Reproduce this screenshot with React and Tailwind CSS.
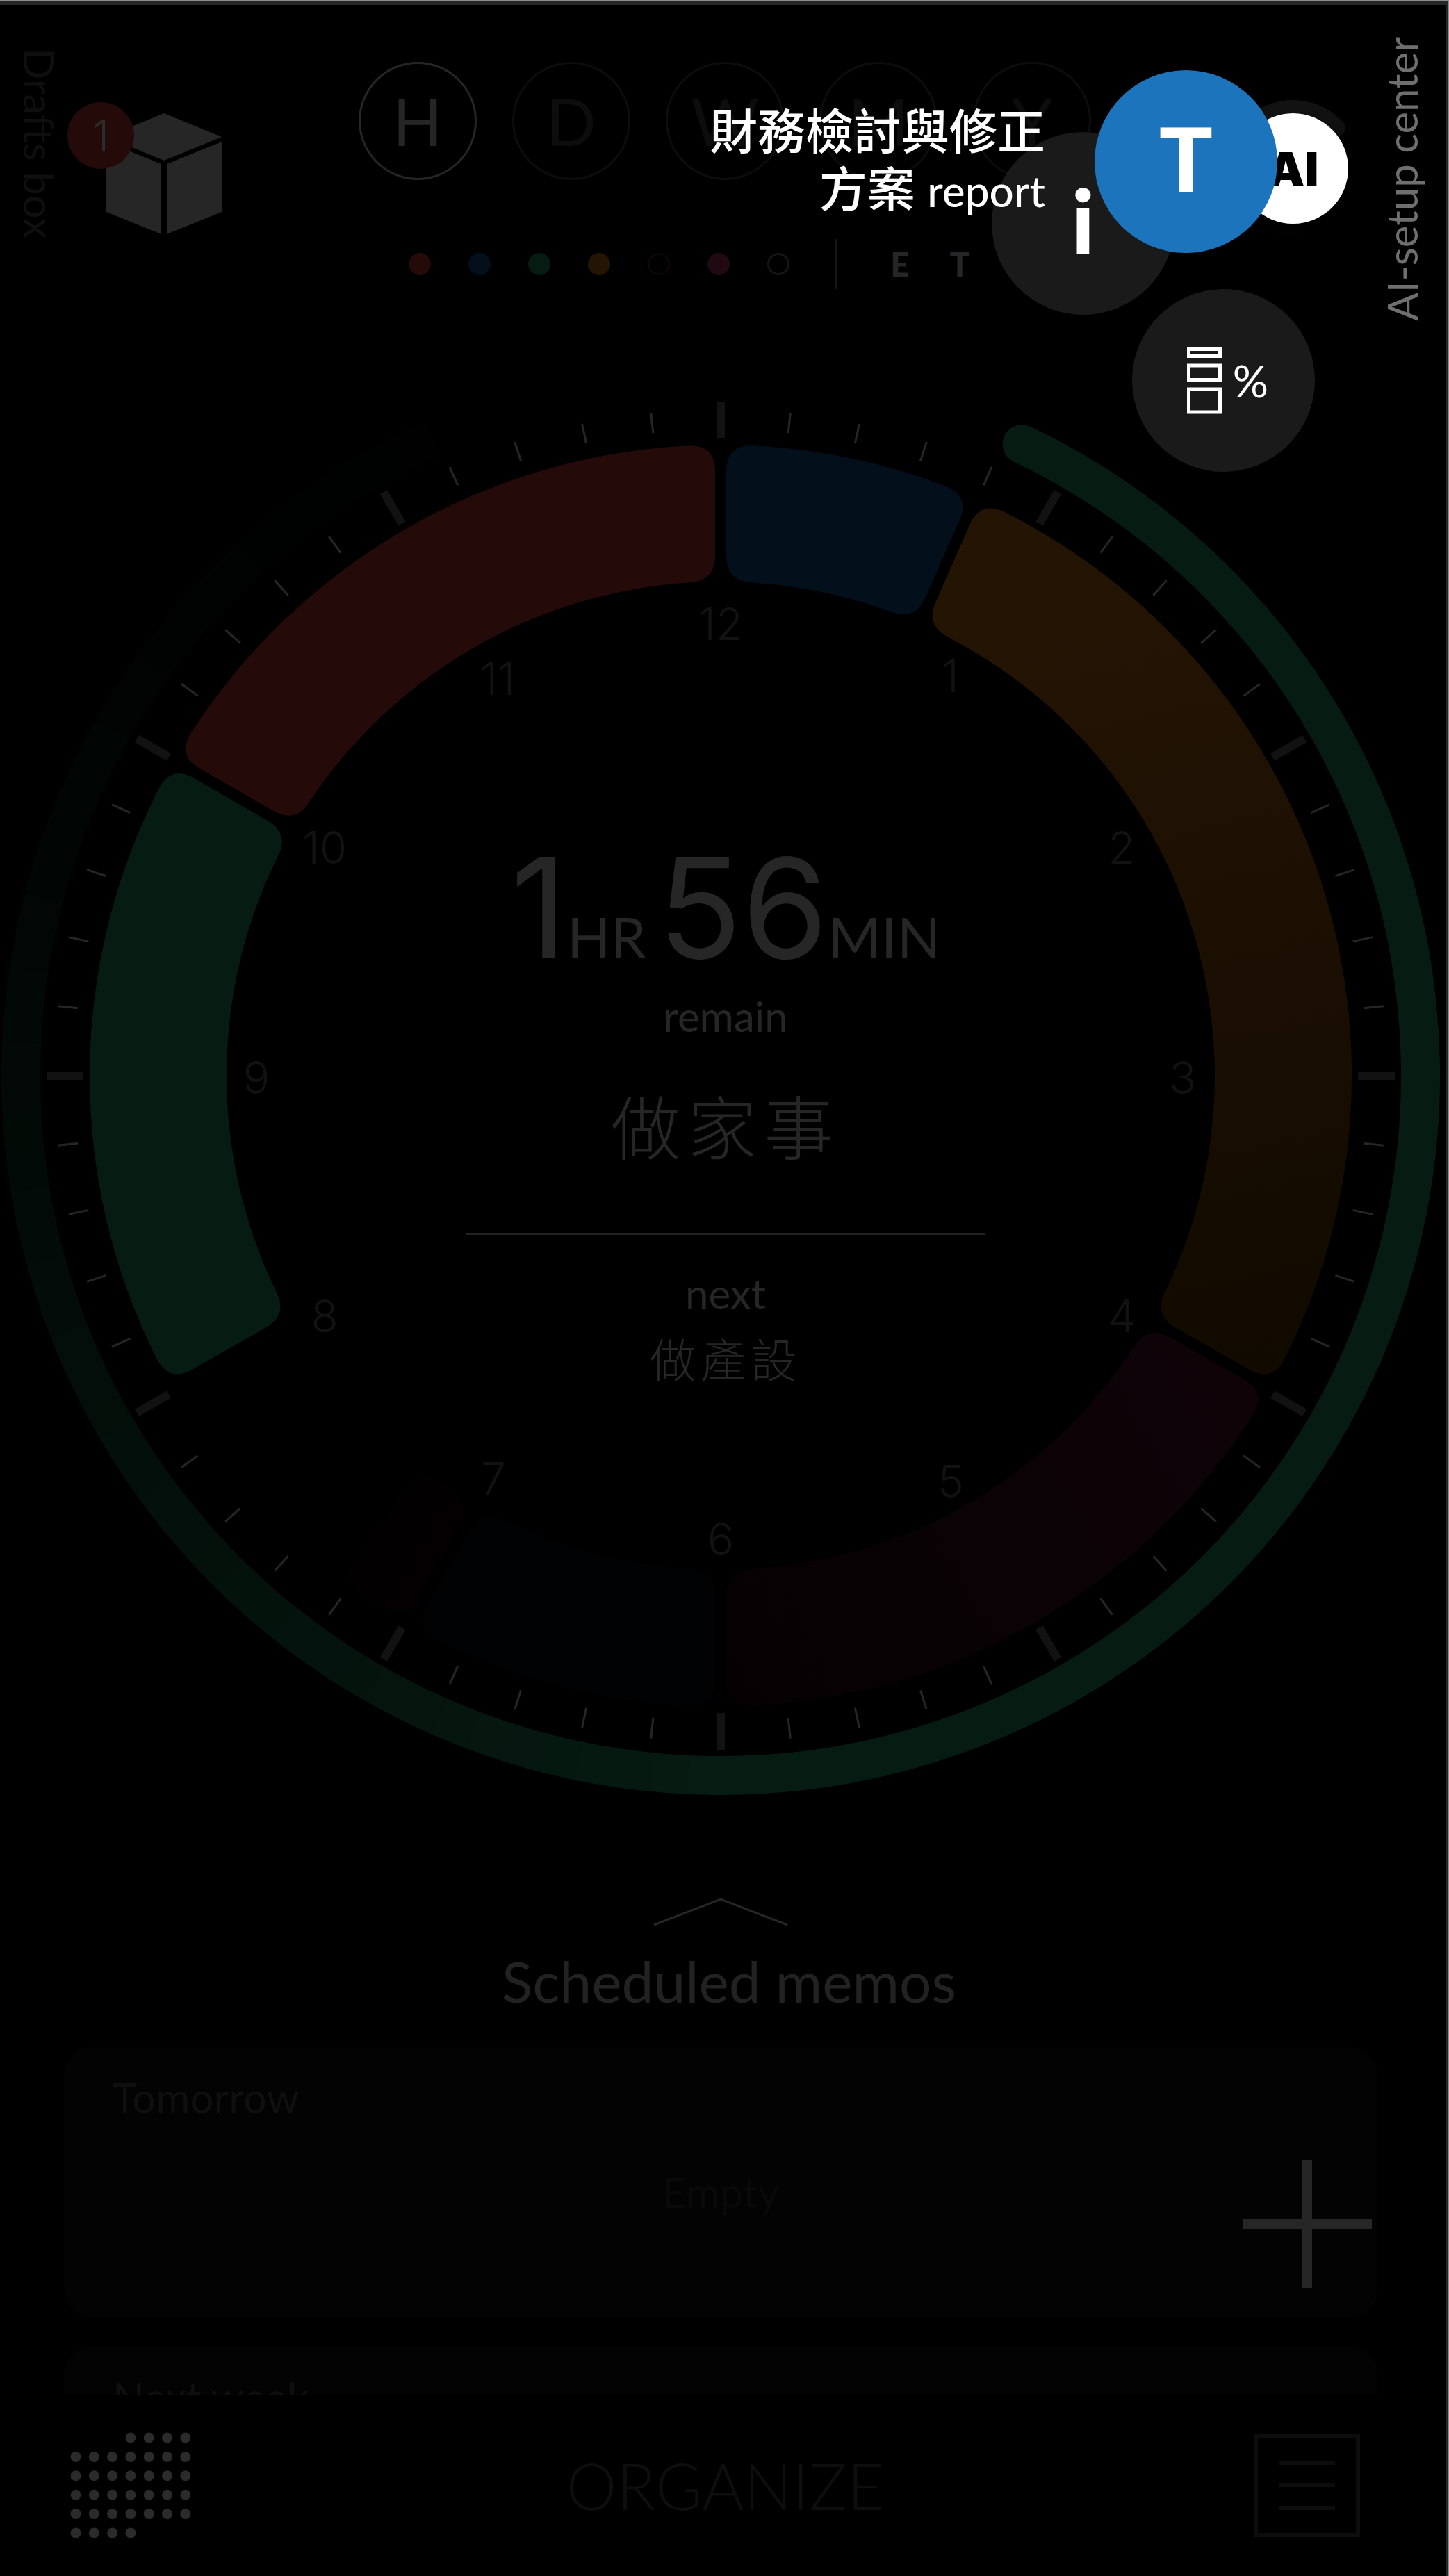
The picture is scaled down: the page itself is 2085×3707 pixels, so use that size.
const RED = '#250a0a';
const BLUE = '#030f1a';
const GREEN = '#061b12';

const CX = 1037;
const CY = 1548;

function polar(r, deg) {
  const a = (deg * Math.PI) / 180;
  return [CX + r * Math.sin(a), CY - r * Math.cos(a)];
}

// Annular sector with rounded corners; `gap` keeps the sides parallel to the hour line.
function sector(from, to, outer = 908, inner = 711, gap = 8, round = 38) {
  const shift = (r, extra) => (Math.asin((gap + extra) / r) * 180) / Math.PI;
  const p = (r, deg) => polar(r, deg).map((n) => n.toFixed(1)).join(' ');
  const o = outer;
  const i = inner;
  const large = to - from > 180 ? 1 : 0;
  return [
    `M ${p(o, from + shift(o, round))}`,
    `A ${o} ${o} 0 ${large} 1 ${p(o, to - shift(o, round))}`,
    `Q ${p(o, to - shift(o, 0))} ${p(o - round, to - shift(o - round, 0))}`,
    `L ${p(i + round, to - shift(i + round, 0))}`,
    `Q ${p(i, to - shift(i, 0))} ${p(i, to - shift(i, round))}`,
    `A ${i} ${i} 0 ${large} 0 ${p(i, from + shift(i, round))}`,
    `Q ${p(i, from + shift(i, 0))} ${p(i + round, from + shift(i + round, 0))}`,
    `L ${p(o - round, from + shift(o - round, 0))}`,
    `Q ${p(o, from + shift(o, 0))} ${p(o, from + shift(o, round))}`,
    'Z',
  ].join(' ');
}

function arc(r, from, to) {
  const [x1, y1] = polar(r, from);
  const [x2, y2] = polar(r, to);
  const large = to - from > 180 ? 1 : 0;
  return `M ${x1} ${y1} A ${r} ${r} 0 ${large} 1 ${x2} ${y2}`;
}

const hours = [
  ['12', 1037, 898], ['1', 1367, 973], ['2', 1614, 1220], ['3', 1702, 1551],
  ['4', 1614, 1894], ['5', 1368, 2132], ['6', 1037, 2215], ['7', 710, 2128],
  ['8', 467, 1894], ['9', 369, 1551], ['10', 467, 1220], ['11', 716, 977],
];

const fade = Array.from({ length: 55 }, (_, k) => {
  const from = 180 + k * 3;
  const t = Math.max(0, 1 - (k + 0.5) / 55);
  const f = Math.pow(t, 1.4);
  return { from, color: `rgb(${Math.round(6 * f)},${Math.round(27 * f)},${Math.round(18 * f)})` };
});

function Dial() {
  return (
    <svg viewBox="0 500 2080 2096" className="col-start-1 row-start-1 block w-full" role="img" aria-label="Twelve hour schedule">
      <defs>
        <linearGradient id="orange" gradientUnits="userSpaceOnUse" x1="1500" y1="900" x2="1750" y2="1980">
          <stop offset="0" stopColor="#241404" />
          <stop offset="1" stopColor="#110a00" />
        </linearGradient>
        <linearGradient id="pink" gradientUnits="userSpaceOnUse" x1="1750" y1="1950" x2="1040" y2="2400">
          <stop offset="0" stopColor="#0f0308" />
          <stop offset="1" stopColor="#050102" />
        </linearGradient>
        <linearGradient id="dimRed" gradientUnits="userSpaceOnUse" x1="640" y1="2240" x2="530" y2="2180">
          <stop offset="0" stopColor="#040001" />
          <stop offset="1" stopColor="#010000" />
        </linearGradient>
      </defs>
      <g fill="none" strokeWidth="56">
        {fade.map((s) => (
          <path key={s.from} d={arc(1007, s.from - 0.3, s.from + 3)} stroke={s.color} />
        ))}
        <path d={arc(1007, 25.5, 180)} stroke={GREEN} />
      </g>
      <circle cx={polar(1007, 25.5)[0]} cy={polar(1007, 25.5)[1]} r="28" fill={GREEN} />
      <path d={sector(0, 23.8)} fill={BLUE} />
      <path d={sector(23.8, 119.6)} fill="url(#orange)" />
      <path d={sector(119.6, 180)} fill="url(#pink)" />
      <path d={sector(180, 209.5)} fill="#010204" />
      <path d={sector(209.5, 218)} fill="url(#dimRed)" />
      <path d={sector(240.4, 300)} fill={GREEN} />
      <path d={sector(300, 360)} fill={RED} />
      {Array.from({ length: 60 }, (_, k) => {
        const major = k % 5 === 0;
        const [x1, y1] = polar(major ? 917 : 930, k * 6);
        const [x2, y2] = polar(major ? 970 : 959, k * 6);
        return (
          <line key={k} x1={x1} y1={y1} x2={x2} y2={y2} stroke={major ? '#121212' : '#262626'} strokeWidth={major ? 12 : 3} />
        );
      })}
      <g fill="#121212" fontSize="64" textAnchor="middle" className="font-[Inter,sans-serif] font-light">
        {hours.map(([label, x, y]) => (
          <text key={label} x={x} y={y + 23}>{label}</text>
        ))}
      </g>
    </svg>
  );
}

function Cube() {
  return (
    <svg viewBox="0 0 166 174" className="w-[166px]" fill="#262626" aria-hidden="true">
      <path d="M83 0 166 34 83 68 0 34Z" />
      <path d="M0 41 79 73V174L0 142Z" />
      <path d="M87 73 166 41V142L87 174Z" />
    </svg>
  );
}

const dots = [
  ['Red', 'bg-[#250a0a]'],
  ['Blue', 'bg-[#030f1a]'],
  ['Green', 'bg-[#061b12]'],
  ['Orange', 'bg-[#241404]'],
  ['Rose', 'border-3 border-[#0f0507]'],
  ['Pink', 'bg-[#200913]'],
  ['None', 'border-3 border-[#161616]'],
];

function Header() {
  return (
    <header className="relative flex items-start">
      <a href="#drafts" className="mt-[62px] ml-[25px] text-[60px] leading-[64px] text-[#0f0f0f] [writing-mode:vertical-rl]">Drafts box</a>
      <button type="button" aria-label="Drafts, 1 new" className="relative mt-[156px] ml-[64px]">
        <Cube />
        <span className="absolute -top-4 -left-14 flex size-24 items-center justify-center rounded-full bg-[#250a0a] font-[Inter,sans-serif] text-[60px] font-light text-[#2c2c2c]">1</span>
      </button>
      <div className="mt-[82px] ml-[197px]">
        <nav aria-label="Range" className="flex gap-[51px] text-[94px] leading-none">
          <button type="button" aria-label="Hour" className="size-[170px] rounded-full border-3 border-[#262626] text-[#262626]">H</button>
          {['D', 'W', 'M', 'Y'].map((l) => (
            <button key={l} type="button" className="size-[170px] rounded-full border-3 border-[#0d0d0d] text-[#0d0d0d]">{l}</button>
          ))}
        </nav>
        <div className="mt-[85px] flex h-[72px] items-center gap-[54px] pl-[72px]">
          {dots.map(([name, style]) => (
            <button key={name} type="button" aria-label={name} className={`size-8 rounded-full ${style}`} />
          ))}
          <div className="mx-3 h-full w-[3px] bg-[#161616]" />
          <div className="flex gap-[38px] text-5xl font-black text-[#262626]">
            <button type="button" className="w-12">E</button>
            <button type="button" className="w-12">T</button>
          </div>
        </div>
      </div>
      <a href="#ai-setup" className="mt-[46px] mr-[31px] mb-[38px] ml-auto rotate-180 text-[60px] leading-[64px] text-[#6f6f6f] [writing-mode:vertical-rl]">AI-setup center</a>
      <RadialMenu />
    </header>
  );
}

function RadialMenu() {
  return (
    <div className="absolute inset-0 text-white">
      <svg viewBox="0 0 200 200" className="absolute top-[135px] right-[119px] size-[200px]" fill="none" aria-hidden="true">
        <defs>
          <linearGradient id="halo" x1="0" y1="0" x2="0" y2="1">
            <stop offset="0" stopColor="#121212" />
            <stop offset="1" stopColor="#010101" />
          </linearGradient>
        </defs>
        <path d="M163 42A86 86 0 1 0 100 186" stroke="url(#halo)" strokeWidth="24" strokeLinecap="round" />
      </svg>
      <button type="button" className="absolute top-[156px] right-[140px] size-[159px] rounded-full bg-white font-[Inter,sans-serif] text-[68px] font-black text-black">AI</button>
      <button type="button" className="absolute top-[183px] right-[390px] size-[263px] rounded-full bg-[#1a1a1a] pb-3 text-[128px] leading-none font-black">i</button>
      <button type="button" className="absolute top-[94px] right-[242px] size-[263px] rounded-full bg-[#1c75bc] pb-3 text-[128px] leading-none font-black">T</button>
      <button type="button" aria-label="Percent report" className="absolute top-[409px] right-[188px] flex size-[263px] items-center justify-center gap-4 rounded-full bg-[#1a1a1a] pl-3">
        <svg viewBox="0 0 50 96" className="w-[50px]" fill="none" stroke="#fff" strokeWidth="5" aria-hidden="true">
          <path d="M2.5 2.5H47.5V12.5H2.5ZM2.5 26H47.5V46.500H2.5ZM2.5 60H47.5V93H2.5Z" />
        </svg>
        <span className="text-[64px]">%</span>
      </button>
      <p className="absolute top-[140px] right-[576px] w-[500px] text-right text-[69px] leading-[83px] font-medium">
        財務檢討與修正<br />方案 <span className="text-[62px]">report</span>
      </p>
    </div>
  );
}

function Remaining() {
  return (
    <section className="col-start-1 row-start-1 flex flex-col items-center pt-[706px] pl-2 text-[#262626]">
      <p className="flex items-baseline text-[82px] leading-none">
        <span className="font-[Inter,sans-serif] text-[200px]">1</span>HR
        <span className="ml-4 font-[Inter,sans-serif] text-[200px]">56</span>MIN
      </p>
      <p className="mt-5 text-[60px] leading-[72px]">remain</p>
      <h1 className="mt-[52px] text-[100px] leading-[144px] font-light tracking-widest">做家事</h1>
      <hr className="mt-20 w-[746px] border-t-3 border-[#222222]" />
      <p className="mt-12 text-[60px] leading-[72px]">next</p>
      <p className="mt-3 text-[66px] leading-[96px] font-light tracking-widest">做產設</p>
    </section>
  );
}

function MonthIcon() {
  const cells = [];
  for (let row = 0; row < 6; row++) {
    for (let col = 0; col < 7; col++) {
      if ((row === 0 && col < 3) || (row === 5 && col > 3)) continue;
      cells.push(<circle key={`${row}-${col}`} cx={8 + col * 26.3} cy={8 + row * 27.4} r="7.500" />);
    }
  }
  return <svg viewBox="0 0 174 153" className="w-[174px]" fill="#2b2b2b" aria-hidden="true">{cells}</svg>;
}

export default function App() {
  return (
    <div className="flex h-screen border-t border-r border-[#8b8f8c] bg-black">
      <div className="flex w-full flex-col overflow-hidden border-t-6 border-r-4 border-[#262726] font-[Lato,'Noto_Sans_CJK_TC',sans-serif]">
        <Header />
        <main className="flex min-h-0 flex-1 flex-col overflow-hidden">
          <div className="grid">
            <Dial />
            <Remaining />
          </div>
          <section className="flex flex-col pt-[134px] pr-[98px] pl-[92px]">
            <button type="button" className="flex flex-col items-center self-center text-[82px] leading-[96px] text-[#222222]">
              <svg viewBox="0 0 194 42" className="mb-[30px] w-[194px]" fill="none" stroke="#262626" strokeWidth="3" aria-hidden="true">
                <path d="M1 40 97 3 193 40" />
              </svg>
              <span className="-mr-6">Scheduled memos</span>
            </button>
            <article className="relative mt-12 h-[389px] rounded-[40px] bg-[#030303] px-[70px] pt-9">
              <h2 className="text-[60px] leading-[72px] text-[#0f0f0f]">Tomorrow</h2>
              <p className="mt-16 text-center text-[60px] leading-[72px] text-[#090909]">Empty</p>
              <button type="button" aria-label="Add memo" className="absolute right-2 bottom-[43px]">
                <svg viewBox="0 0 186 184" className="w-[186px]" stroke="#262626" strokeWidth="14" aria-hidden="true">
                  <path d="M0 92H186M93 0V184" />
                </svg>
              </button>
            </article>
            <article className="mt-[42px] h-[389px] rounded-[40px] bg-[#030303] px-[70px] pt-9">
              <h2 className="text-[60px] leading-[72px] text-[#0f0f0f]">Next week</h2>
            </article>
          </section>
        </main>
        <footer className="flex h-[261px] shrink-0 items-center justify-between bg-black pr-[123px] pl-[101px]">
          <button type="button" aria-label="Month"><MonthIcon /></button>
          <button type="button" className="pl-2 text-[92px] leading-none font-light text-[#0e0e0e]">ORGANIZE</button>
          <button type="button" aria-label="List">
            <svg viewBox="0 0 153 148" className="w-[153px]" fill="none" stroke="#0d0d0d" strokeWidth="6" aria-hidden="true">
              <path d="M3 3H150V145H3ZM36 41H117M36 73H117M36 106H117" />
            </svg>
          </button>
        </footer>
      </div>
    </div>
  );
}
